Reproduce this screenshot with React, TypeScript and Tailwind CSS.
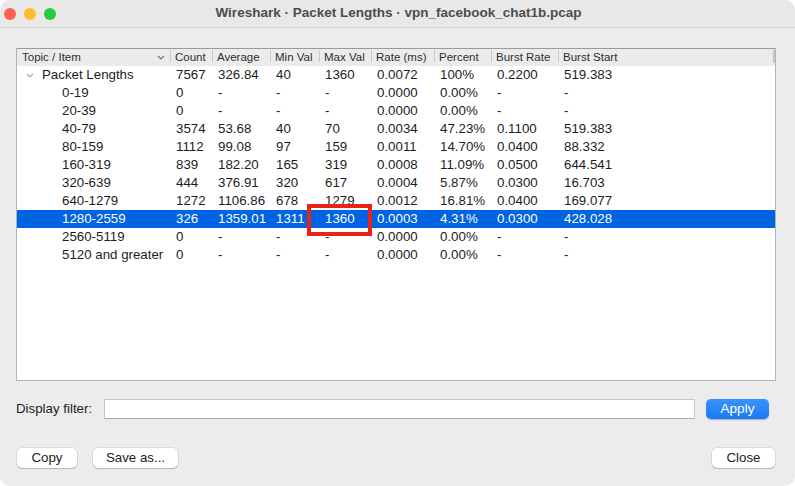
import { Fragment } from "react";

const columns = [
  { label: "Topic / Item", width: "w-[153px]" },
  { label: "Count", width: "w-[42px]" },
  { label: "Average", width: "w-[58px]" },
  { label: "Min Val", width: "w-[49px]" },
  { label: "Max Val", width: "w-[52px]" },
  { label: "Rate (ms)", width: "w-[63px]" },
  { label: "Percent", width: "w-[57px]" },
  { label: "Burst Rate", width: "w-[67px]" },
  { label: "Burst Start", width: "flex-1" },
];

const rows = [
  ["0-19", "0", "-", "-", "-", "0.0000", "0.00%", "-", "-"],
  ["20-39", "0", "-", "-", "-", "0.0000", "0.00%", "-", "-"],
  ["40-79", "3574", "53.68", "40", "70", "0.0034", "47.23%", "0.1100", "519.383"],
  ["80-159", "1112", "99.08", "97", "159", "0.0011", "14.70%", "0.0400", "88.332"],
  ["160-319", "839", "182.20", "165", "319", "0.0008", "11.09%", "0.0500", "644.541"],
  ["320-639", "444", "376.91", "320", "617", "0.0004", "5.87%", "0.0300", "16.703"],
  ["640-1279", "1272", "1106.86", "678", "1279", "0.0012", "16.81%", "0.0400", "169.077"],
  ["1280-2559", "326", "1359.01", "1311", "1360", "0.0003", "4.31%", "0.0300", "428.028"],
  ["2560-5119", "0", "-", "-", "-", "0.0000", "0.00%", "-", "-"],
  ["5120 and greater", "0", "-", "-", "-", "0.0000", "0.00%", "-", "-"],
];

const parent = ["Packet Lengths", "7567", "326.84", "40", "1360", "0.0072", "100%", "0.2200", "519.383"];

function Chevron({ className }: { className?: string }) {
  return (
    <svg width="8" height="5" viewBox="0 0 8 5" className={className}>
      <path d="M1 1l3 3 3-3" fill="none" stroke="currentColor" strokeWidth="1.1" />
    </svg>
  );
}

function Row({ cells, selected, isParent }: { cells: string[]; selected?: boolean; isParent?: boolean }) {
  return (
    <div
      className={`relative flex h-[18px] items-center ${
        selected ? "bg-[#0063e1] text-white" : "text-[#1d1d1d]"
      }`}
    >
      {cells.map((c, i) => (
        <div key={i} className={`${columns[i].width} whitespace-nowrap ${i === 0 ? "" : "pl-[6px]"}`}>
          {i === 0 ? (
            isParent ? (
              <div className="flex items-center">
                <Chevron className="ml-[9px] mr-[8px] text-[#a8a8a8]" />
                {c}
              </div>
            ) : (
              <div className="pl-[45px]">{c}</div>
            )
          ) : (
            c
          )}
        </div>
      ))}
      {selected && (
        <div className="absolute left-[290px] top-[-6px] h-[32px] w-[65px] border-4 border-[#e8231a]" />
      )}
    </div>
  );
}

export default function App() {
  return (
    <div
      className="h-[486px] w-[795px] overflow-hidden bg-white"
      style={{ fontFamily: '"Liberation Sans", Arial, sans-serif' }}
    >
      <div className="flex h-full w-full flex-col overflow-hidden rounded-[10px] bg-[#ececec]">
        {/* title bar */}
        <div className="relative flex h-[28px] shrink-0 items-center justify-center border-b border-[#d2d2d2] bg-[#e8e8e8]">
          <div className="absolute left-[4px] top-[8px] flex gap-[8px]">
            <span className="h-[12px] w-[12px] rounded-full bg-[#fe5f57]" />
            <span className="h-[12px] w-[12px] rounded-full bg-[#febc2e]" />
            <span className="h-[12px] w-[12px] rounded-full bg-[#28c840]" />
          </div>
          <span className="ml-[2px] text-[13.5px] font-bold text-[#4d4d4d]">
            Wireshark · Packet Lengths · vpn_facebook_chat1b.pcap
          </span>
        </div>

        {/* table */}
        <div className="ml-[16px] mr-[19px] mt-[20px] flex h-[333px] flex-col border border-[#b3b3b3] border-t-[#9a9a9a] bg-white">
          <div className="flex h-[17px] shrink-0 items-center bg-[#ebebeb] text-[11.5px] text-[#2e2e2e]">
            {columns.map((col, i) => (
              <div
                key={col.label}
                className={`${col.width} relative flex items-center whitespace-nowrap pl-[5px]`}
              >
                {i > 0 && <span className="absolute left-0 top-[1px] h-[12px] w-px bg-[#c9c9c9]" />}
                <span>{col.label}</span>
                {i === 0 && <Chevron className="ml-auto mr-[5px] text-[#6e6e6e]" />}
                {i === columns.length - 1 && (
                  <span className="absolute right-0 top-[1px] h-[13px] w-[2px] bg-[#c4c4c4]" />
                )}
              </div>
            ))}
          </div>
          <div className="text-[13.3px]">
            <Row cells={parent} isParent />
            {rows.map((r) => (
              <Fragment key={r[0]}>
                <Row cells={r} selected={r[0] === "1280-2559"} />
              </Fragment>
            ))}
          </div>
        </div>

        {/* display filter */}
        <div className="mt-[18px] flex items-center pl-[16px] pr-[26px] text-[13.3px] text-[#1d1d1d]">
          <span className="w-[88px] whitespace-nowrap">Display filter:</span>
          <input
            className="h-[20px] flex-1 border border-[#c6c6c6] border-b-[#a9a9a9] bg-white px-1 outline-none"
            type="text"
          />
          <button className="ml-[11px] h-[20px] w-[63px] rounded-[5px] bg-gradient-to-b from-[#3a93fc] to-[#1579f8] text-[13.5px] text-white shadow-[0_0.5px_1px_rgba(0,0,0,0.25)]">
            Apply
          </button>
        </div>

        {/* buttons */}
        <div className="mt-[29px] flex items-center pl-[17px] pr-[20px] text-[13.3px] text-[#1d1d1d]">
          <button className="h-[20px] w-[60px] rounded-[5px] bg-white shadow-[0_0_0_0.5px_rgba(0,0,0,0.15),0_1px_1px_rgba(0,0,0,0.18)]">
            Copy
          </button>
          <button className="ml-[16px] h-[20px] w-[85px] rounded-[5px] bg-white shadow-[0_0_0_0.5px_rgba(0,0,0,0.15),0_1px_1px_rgba(0,0,0,0.18)]">
            Save as...
          </button>
          <button className="ml-auto h-[20px] w-[63px] rounded-[5px] bg-white shadow-[0_0_0_0.5px_rgba(0,0,0,0.15),0_1px_1px_rgba(0,0,0,0.18)]">
            Close
          </button>
        </div>
      </div>
    </div>
  );
}
